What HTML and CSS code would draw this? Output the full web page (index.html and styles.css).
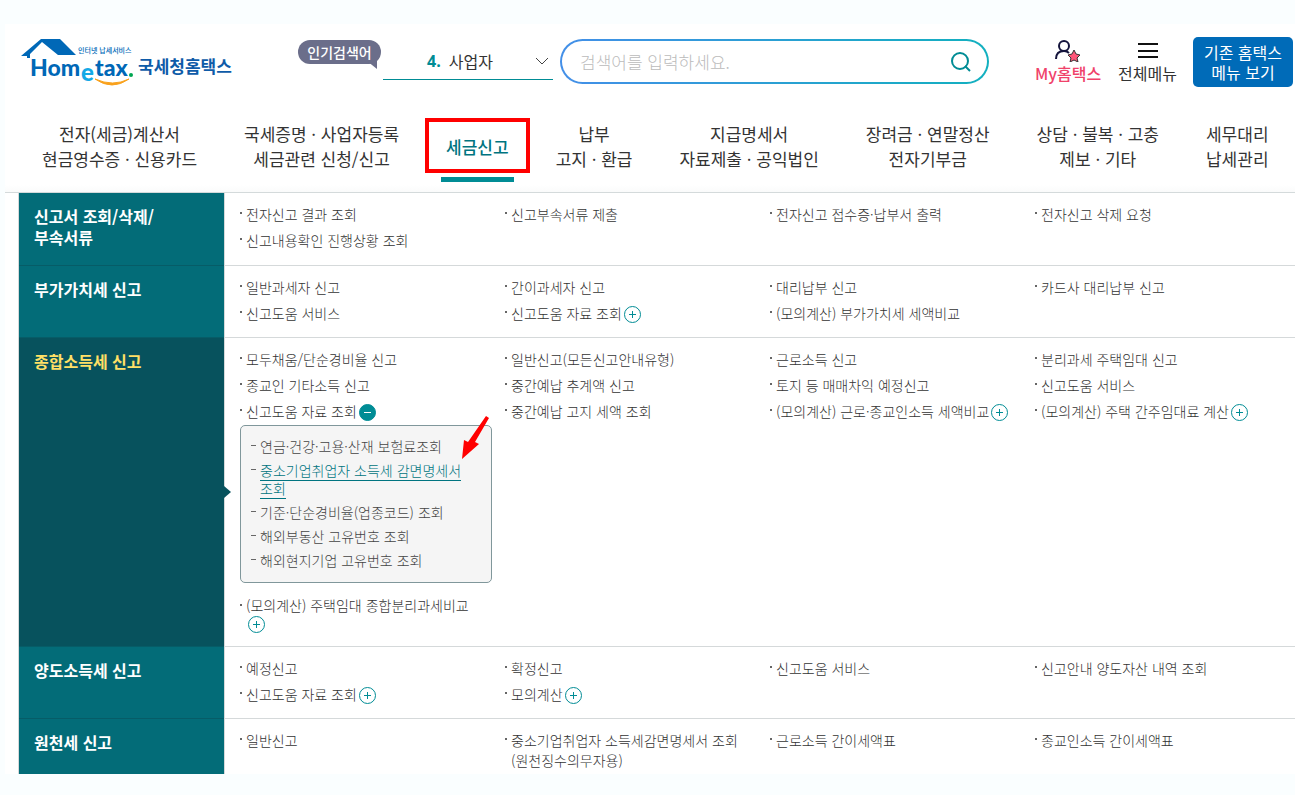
FILE: index.html
```
<!DOCTYPE html>
<html lang="ko">
<head>
	<meta charset="UTF-8">
	<meta name="viewport" content="width=device-width, initial-scale=1">
	<title>국세청홈택스</title>
	<link rel="stylesheet" href="styles.css">
</head>
<body>
	<div class="page">
		<header class="header">
			<a href="#" class="logo">
				<svg width="212" height="52" viewBox="0 0 212 52">
					<path d="M0 19 20 2h19l16 16H37L21 5 9 17v4H6v-2z" fill="#0068b7"/>
					<text class="logo-sub" x="57" y="16">인터넷 납세서비스</text>
					<text class="logo-en" x="9" y="39">Hom</text>
					<text class="logo-e" x="60" y="44">e</text>
					<text class="logo-en" x="74" y="39">tax</text>
					<circle cx="110" cy="38" r="2" fill="#00a651"/>
					<path d="M74 42q17 12 34 0-16 8-34 0z" fill="#f9a11b" stroke="#f9a11b"/>
					<text class="logo-ko" x="117" y="36">국세청홈택스</text>
				</svg>
			</a>
			<span class="badge">인기검색어</span>
			<div class="rank">
				<label for="rank">4.</label>
				<select id="rank"><option>사업자</option></select>
				<svg width="14" height="8" viewBox="0 0 14 8"><path d="M1 1l6 6 6-6" fill="none" stroke="#444"/></svg>
			</div>
			<form class="search">
				<input type="text" placeholder="검색어를 입력하세요." aria-label="검색어">
				<button type="button" aria-label="검색">
					<svg width="22" height="22" viewBox="0 0 22 22" fill="none" stroke="#008c95" stroke-width="2"><circle cx="10" cy="10" r="8"/><path d="M15 15l5 5"/></svg>
				</button>
			</form>
			<a href="#" class="util my">
				<svg width="26" height="22" viewBox="0 0 26 22"><g fill="none" stroke="#14143c" stroke-width="2"><circle cx="9" cy="6" r="5"/><path d="M1 19c0-5 3-8 8-8 2 0 3 0 5 2"/></g><path d="M19 10l2 4 4 1-3 3 1 4-4-2-4 2 1-4-3-3 4-1z" fill="#ff5578" stroke="#333"/></svg>
				<span>My홈택스</span>
			</a>
			<button type="button" class="util">
				<svg width="20" height="22" viewBox="0 0 20 22"><path d="M0 4h20M0 11h20M0 17h20" stroke="#111" stroke-width="2"/></svg>
				<span>전체메뉴</span>
			</button>
			<button type="button" class="old">기존 홈택스<br>메뉴 보기</button>
		</header>

		<nav class="gnb">
			<a href="#">전자(세금)계산서<br>현금영수증 · 신용카드</a>
			<a href="#">국세증명 · 사업자등록<br>세금관련 신청/신고</a>
			<a href="#" class="on">세금신고<span class="mark"></span></a>
			<a href="#">납부<br>고지 · 환급</a>
			<a href="#">지급명세서<br>자료제출 · 공익법인</a>
			<a href="#">장려금 · 연말정산<br>전자기부금</a>
			<a href="#">상담 · 불복 · 고충<br>제보 · 기타</a>
			<a href="#">세무대리<br>납세관리</a>
		</nav>

		<div class="menu">
			<section class="row">
				<h2>신고서 조회/삭제/<br>부속서류</h2>
				<div class="cols">
					<ul>
						<li><a href="#">전자신고 결과 조회</a></li>
						<li><a href="#">신고내용확인 진행상황 조회</a></li>
					</ul>
					<ul>
						<li><a href="#">신고부속서류 제출</a></li>
					</ul>
					<ul>
						<li><a href="#">전자신고 접수증·납부서 출력</a></li>
					</ul>
					<ul>
						<li><a href="#">전자신고 삭제 요청</a></li>
					</ul>
				</div>
			</section>
			<section class="row">
				<h2>부가가치세 신고</h2>
				<div class="cols">
					<ul>
						<li><a href="#">일반과세자 신고</a></li>
						<li><a href="#">신고도움 서비스</a></li>
					</ul>
					<ul>
						<li><a href="#">간이과세자 신고</a></li>
						<li><a href="#">신고도움 자료 조회</a><button type="button" class="more" aria-label="펼치기"></button></li>
					</ul>
					<ul>
						<li><a href="#">대리납부 신고</a></li>
						<li><a href="#">(모의계산) 부가가치세 세액비교</a></li>
					</ul>
					<ul>
						<li><a href="#">카드사 대리납부 신고</a></li>
					</ul>
				</div>
			</section>
			<section class="row active">
				<h2>종합소득세 신고</h2>
				<div class="cols">
					<ul>
						<li><a href="#">모두채움/단순경비율 신고</a></li>
						<li><a href="#">종교인 기타소득 신고</a></li>
						<li>
							<a href="#">신고도움 자료 조회</a><button type="button" class="more open" aria-label="접기"></button>
							<ul class="sub">
								<li><a href="#">연금·건강·고용·산재 보험료조회</a></li>
								<li><a href="#" class="sel">중소기업취업자 소득세 감면명세서 조회</a></li>
								<li><a href="#">기준·단순경비율(업종코드) 조회</a></li>
								<li><a href="#">해외부동산 고유번호 조회</a></li>
								<li><a href="#">해외현지기업 고유번호 조회</a></li>
							</ul>
						</li>
						<li class="long"><a href="#">(모의계산) 주택임대 종합분리과세비교</a> <button type="button" class="more" aria-label="펼치기"></button></li>
					</ul>
					<ul>
						<li><a href="#">일반신고(모든신고안내유형)</a></li>
						<li><a href="#">중간예납 추계액 신고</a></li>
						<li><a href="#">중간예납 고지 세액 조회</a></li>
					</ul>
					<ul>
						<li><a href="#">근로소득 신고</a></li>
						<li><a href="#">토지 등 매매차익 예정신고</a></li>
						<li><a href="#">(모의계산) 근로·종교인소득 세액비교</a><button type="button" class="more" aria-label="펼치기"></button></li>
					</ul>
					<ul>
						<li><a href="#">분리과세 주택임대 신고</a></li>
						<li><a href="#">신고도움 서비스</a></li>
						<li><a href="#">(모의계산) 주택 간주임대료 계산</a><button type="button" class="more" aria-label="펼치기"></button></li>
					</ul>
				</div>
			</section>
			<section class="row">
				<h2>양도소득세 신고</h2>
				<div class="cols">
					<ul>
						<li><a href="#">예정신고</a></li>
						<li><a href="#">신고도움 자료 조회</a><button type="button" class="more" aria-label="펼치기"></button></li>
					</ul>
					<ul>
						<li><a href="#">확정신고</a></li>
						<li><a href="#">모의계산</a><button type="button" class="more" aria-label="펼치기"></button></li>
					</ul>
					<ul>
						<li><a href="#">신고도움 서비스</a></li>
					</ul>
					<ul>
						<li><a href="#">신고안내 양도자산 내역 조회</a></li>
					</ul>
				</div>
			</section>
			<section class="row">
				<h2>원천세 신고</h2>
				<div class="cols">
					<ul>
						<li><a href="#">일반신고</a></li>
					</ul>
					<ul>
						<li><a href="#">중소기업취업자 소득세감면명세서 조회<br>(원천징수의무자용)</a></li>
					</ul>
					<ul>
						<li><a href="#">근로소득 간이세액표</a></li>
					</ul>
					<ul>
						<li><a href="#">종교인소득 간이세액표</a></li>
					</ul>
				</div>
			</section>
		</div>
	</div>
	<svg class="arrow" width="30" height="46" viewBox="0 0 30 46"><path d="M26 1l3 2-14 24 4 2L2 44 4 25l4 2z" fill="#f00"/></svg>
</body>
</html>
```
FILE: styles.css
```
* {
	box-sizing: border-box;
}
body {
	position: relative;
	margin: 0;
	padding: 24px 0 23px 5px;
	background-color: #fafeff;
	color: #333;
	font-family: "Noto Sans CJK KR", sans-serif;
	overflow-x: hidden;
}
a {
	color: inherit;
	text-decoration: none;
}
button, input, select {
	margin: 0;
	padding: 0;
	border: 0;
	background: none;
	color: inherit;
	font: inherit;
}
ul {
	margin: 0;
	padding: 0;
	list-style: none;
}
svg {
	display: block;
}
.page {
	background-color: #fff;
}

/* 상단 */
.header {
	display: flex;
	align-items: flex-start;
	height: 97px;
	padding: 13px 2px 0 16px;
	font-size: 16px;
}
.logo-sub {
	fill: #0068b7;
	font-size: 7px;
	font-weight: 500;
}
.logo-en {
	fill: #0068b7;
	font: 900 23px Lato, sans-serif;
}
.logo-e {
	fill: #14a9e6;
	font: 900 24px Lato, sans-serif;
}
.logo-ko {
	fill: #0e5ba8;
	font-size: 17px;
	font-weight: 700;
}
.badge {
	position: relative;
	margin: 3px 2px 0 65px;
	width: 83px;
	border-radius: 12px;
	background-color: #6b6e8a;
	color: #fff;
	font-size: 14px;
	font-weight: 500;
	line-height: 24px;
	text-align: center;
}
.badge::after {
	content: "";
	position: absolute;
	right: 4px;
	bottom: -5px;
	border-top: 8px solid #6b6e8a;
	border-left: 10px solid transparent;
}
.rank {
	display: flex;
	align-items: center;
	width: 170px;
	height: 43px;
	margin-right: 7px;
	padding: 5px 4px 0 44px;
	border-bottom: 1px solid #008c95;
}
.rank label {
	color: #008c95;
	font: 700 16px "Open Sans", sans-serif;
}
.rank select {
	flex: 1;
	margin-left: 8px;
	appearance: none;
}
.search {
	display: flex;
	flex: 1;
	align-items: center;
	height: 45px;
	margin: 2px 46px 0 0;
	padding: 0 15px 0 18px;
	border: 2px solid transparent;
	border-radius: 23px;
	background: linear-gradient(#fff, #fff) padding-box, linear-gradient(90deg, #438fe8, #12b0bf) border-box;
}
.search input {
	flex: 1;
	min-width: 0;
	outline: 0;
	font-size: 17px;
	font-weight: 300;
}
.search input::placeholder {
	color: #bbb;
}
.util {
	display: flex;
	flex-direction: column;
	align-items: center;
	margin: 3px 16px 0 0;
	line-height: 22px;
}
.my {
	margin-right: 17px;
	color: #f0426a;
	font-weight: 500;
}
.old {
	width: 100px;
	height: 50px;
	border-radius: 5px;
	background-color: #006bb8;
	color: #fff;
	line-height: 20px;
}

/* 주메뉴 */
.gnb {
	display: flex;
	gap: 47px;
	align-items: center;
	padding: 0 0 21px 37px;
	border-bottom: 1px solid #d4dadb;
	background: linear-gradient(#fff 90%, #fafbfb);
	font-size: 17px;
	line-height: 25px;
	text-align: center;
	white-space: nowrap;
}
.gnb .on {
	position: relative;
	color: #007480;
	font-weight: 500;
}
.gnb .on::after {
	content: "";
	position: absolute;
	left: -5px;
	right: -5px;
	bottom: -23px;
	height: 5px;
	background-color: #008c95;
}
.mark {
	position: absolute;
	left: -21px;
	right: -21px;
	top: -16px;
	bottom: -14px;
	border: 4px solid #f00;
}

/* 전체 펼침 메뉴 */
.menu {
	margin-left: 13px;
	border-left: 1px solid #d5d9da;
}
.row {
	display: flex;
	overflow: hidden;
}
.row h2 {
	position: relative;
	flex: none;
	width: 205px;
	margin: 0;
	padding: 13px 15px 17px;
	border-bottom: 1px solid #065c67;
	background-color: #036c78;
	color: #fff;
	font-size: 16px;
	font-weight: 700;
	line-height: 21px;
}
.row.active h2 {
	background-color: #07525d;
	color: #ffe066;
}
.row.active h2::after {
	content: "";
	position: absolute;
	left: 205px;
	top: 50%;
	margin-top: -6px;
	border: 6px solid transparent;
	border-left: 7px solid #07525d;
	border-right: 0;
}
.cols {
	display: grid;
	flex: 1;
	grid-template-columns: repeat(4, minmax(265px, 1fr));
	padding: 11px 0 14px 15px;
	border-left: 1px solid #d5d9da;
	border-bottom: 1px solid #d5d9da;
	font-size: 14px;
	font-weight: 300;
	line-height: 20px;
}
.row:last-child h2, .row:last-child .cols {
	padding-bottom: 4px;
	border-bottom: 0;
}
.cols > ul {
	padding-right: 13px;
}
.cols > ul > li {
	position: relative;
	padding-left: 6px;
}
.cols > ul > li + li {
	margin-top: 6px;
}
.cols > ul > li::before {
	content: "";
	position: absolute;
	left: 0;
	top: 8px;
	width: 2px;
	height: 2px;
	background-color: #666;
}
.cols > ul > .long {
	padding-right: 20px;
	line-height: 18px;
}
.more {
	display: inline-block;
	width: 17px;
	height: 17px;
	margin: -2px 0 -2px 2px;
	border: 1px solid #008c95;
	border-radius: 50%;
	background: linear-gradient(#008c95, #008c95) center / 7px 1px no-repeat, linear-gradient(#008c95, #008c95) center / 1px 7px no-repeat;
	vertical-align: -3px;
}
.more.open {
	background: linear-gradient(#fff, #fff) center / 7px 1px no-repeat #008c95;
}
.sub {
	margin: 4px 0 13px -6px;
	padding: 11px 10px 13px;
	border: 1px solid #80979b;
	border-radius: 5px;
	background-color: #f5f5f5;
	color: #444;
	line-height: 18px;
	word-break: keep-all;
}
.sub li {
	position: relative;
	padding-left: 9px;
}
.sub li + li {
	margin-top: 6px;
}
.sub li::before {
	content: "";
	position: absolute;
	left: 0;
	top: 8px;
	width: 5px;
	height: 1px;
	background-color: #666;
}
.sub .sel {
	border-bottom: 1px solid #007480;
	color: #007480;
}
.arrow {
	position: absolute;
	left: 460px;
	top: 415px;
}
```
